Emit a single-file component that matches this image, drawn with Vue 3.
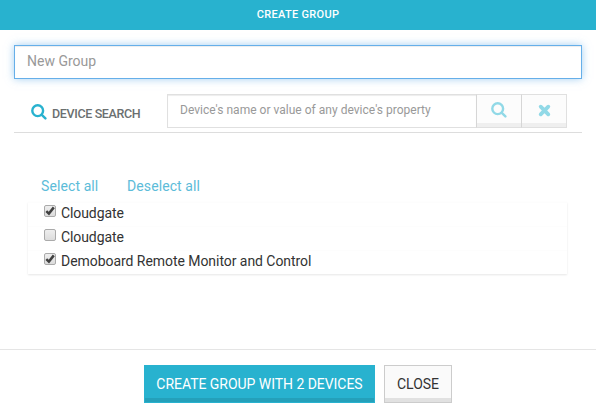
<script setup>
import { ref, computed } from 'vue'

const groupName = ref('')
const query = ref('')
const devices = ref([
  { id: 1, name: 'Cloudgate', checked: true, wide: false },
  { id: 2, name: 'Cloudgate', checked: false, wide: false },
  { id: 3, name: 'Demoboard Remote Monitor and Control', checked: true, wide: true }
])
const selected = computed(() => devices.value.filter((d) => d.checked).length)
const setAll = (v) => devices.value.forEach((d) => (d.checked = v))
</script>

<template>
  <div class="dialog">
    <header class="title"><span>CREATE GROUP</span></header>
    <main class="body">
      <input v-model="groupName" class="field name" type="text" placeholder="New Group" />
      <div class="search">
        <div class="label">
          <svg class="lens" viewBox="0 0 16 16"><circle cx="6.7" cy="6.7" r="5.4" /><path d="M10.8 10.8L14.4 14.4" /></svg>
          <span>DEVICE SEARCH</span>
        </div>
        <input v-model="query" class="field query" type="text" placeholder="Device's name or value of any device's property" />
        <button class="tool" aria-label="Search">
          <svg class="lens pale" viewBox="0 0 16 16"><circle cx="6.7" cy="6.7" r="5.4" /><path d="M10.8 10.8L14.4 14.4" /></svg>
        </button>
        <button class="tool last" aria-label="Clear" @click="query = ''">
          <svg class="cross" viewBox="0 0 12 12"><path d="M2.5 2.5L9.5 9.5M9.5 2.5L2.5 9.5" /></svg>
        </button>
      </div>
      <div class="links">
        <a class="all" @click="setAll(true)">Select all</a>
        <a class="none" @click="setAll(false)">Deselect all</a>
      </div>
      <ul class="list">
        <li v-for="d in devices" :key="d.id" class="device" @click="d.checked = !d.checked">
          <span class="box">
            <svg v-if="d.checked" viewBox="0 0 10 10"><path d="M1.3 5.1L3.9 7.6L8.8 1.4" /></svg>
          </span>
          <span class="text" :class="{ wide: d.wide }">{{ d.name }}</span>
        </li>
      </ul>
    </main>
    <footer class="footer">
      <button class="btn primary"><span>CREATE GROUP WITH {{ selected }} DEVICES</span></button>
      <button class="btn close"><span>CLOSE</span></button>
    </footer>
  </div>
</template>

<style>
body { margin: 0; background: #fff; }
</style>

<style scoped>
.dialog, .dialog * { box-sizing: border-box; }
.dialog {
  width: 596px;
  height: 416px;
  display: flex;
  flex-direction: column;
  overflow: hidden;
  background: #fff;
  font-family: Roboto, "Liberation Sans", sans-serif;
  color: #333;
}
button, input { font-family: inherit; margin: 0; border-radius: 0; outline: none; }
.title {
  flex: none;
  height: 30px;
  display: flex;
  justify-content: center;
  padding-top: 1px;
  background: #28b2cf;
  color: #fff;
  font-size: 11px;
  font-weight: 500;
  line-height: 28px;
  letter-spacing: 0.3px;
}
.body { flex: 1; padding: 15px 14px 0; }
.field { display: block; background: #fff; color: #555; }
.field::placeholder { color: #999; opacity: 1; }
.name {
  width: 568px;
  height: 34px;
  padding: 0 12px 2px;
  border: 1px solid #66afe9;
  box-shadow: inset 0 1px 1px rgba(0, 0, 0, 0.075), 0 0 8px rgba(102, 175, 233, 0.6);
  font-size: 14px;
}
.search {
  height: 54px;
  padding: 15px 15px 0 0;
  display: flex;
  border-bottom: 1px solid #ddd;
}
.label {
  width: 153px;
  height: 34px;
  padding: 4px 0 0 17px;
  display: flex;
  align-items: center;
  gap: 5px;
  color: #6b6f70;
  font-size: 12.5px;
  font-weight: 500;
  letter-spacing: -0.36px;
  white-space: nowrap;
}
.label .lens { margin-top: -2px; }
.lens { flex: none; width: 16px; height: 16px; fill: none; stroke: #28b2cf; stroke-width: 2.4; stroke-linecap: round; }
.pale { stroke: #91d9e7; }
.query {
  width: 309px;
  height: 34px;
  padding: 0 12px 2px;
  border: 1px solid #e0e0e0;
  border-right: 0;
  box-shadow: inset 0 1px 1px rgba(0, 0, 0, 0.075);
  font-size: 12px;
  letter-spacing: 0.02px;
}
.tool {
  width: 45px;
  height: 34px;
  padding: 0 0 2px;
  display: flex;
  align-items: center;
  justify-content: center;
  border: 1px solid #e0e0e0;
  border-left-color: #d6d6d6;
  border-right: 0;
  background: #fcfcfc;
  box-shadow: inset 0 -4px 0 #efefef;
}
.tool.last { width: 46px; border-right: 1px solid #e0e0e0; }
.cross { width: 13px; height: 13px; fill: none; stroke: #91d9e7; stroke-width: 3.5; stroke-linecap: round; }
.links {
  display: flex;
  height: 69px;
  padding: 43px 0 0 27px;
  color: #5cbcd9;
  font-size: 14px;
  line-height: 20px;
  letter-spacing: 0.1px;
}
.links a { cursor: pointer; white-space: nowrap; }
.all { width: 86px; }
.list {
  width: 539px;
  height: 72px;
  margin: 0 0 0 14px;
  padding: 0;
  list-style: none;
  box-shadow: 0 1px 2px rgba(0, 0, 0, 0.1);
}
.device { height: 24px; display: flex; padding-left: 16px; border-top: 1px solid #fdfdfd; }
.box {
  flex: none;
  width: 12px;
  height: 12px;
  margin: 2px 5px 0 0;
  border: 1px solid #aaa;
  border-radius: 2px;
  background: linear-gradient(#eee, #dcdcdc);
}
.box svg { display: block; width: 10px; height: 10px; overflow: visible; fill: none; stroke: #404040; stroke-width: 2.5; }
.text { font-size: 14px; line-height: 20px; letter-spacing: -0.09px; white-space: nowrap; }
.text.wide { letter-spacing: -0.05px; }
.footer {
  flex: none;
  height: 67px;
  padding: 15px 0 0 144px;
  display: flex;
  gap: 9px;
  border-top: 1px solid #e5e5e5;
}
.btn { height: 38px; padding: 0; font-size: 14px; letter-spacing: -0.04px; white-space: nowrap; }
.primary { width: 231px; border: 1px solid #28b2cf; background: #28b2cf; box-shadow: inset 0 -4px 0 #24a0ba; color: #fff; }
.close { width: 68px; border: 1px solid #ccc; background: #fafafa; box-shadow: inset 0 -4px 0 #e1e1e1; color: #333; }
</style>
